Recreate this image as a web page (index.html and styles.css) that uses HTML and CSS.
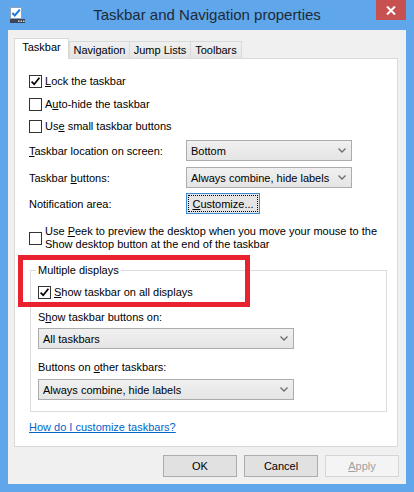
FILE: index.html
```html
<!DOCTYPE html>
<html>
<head>
<meta charset="utf-8">
<title>Taskbar and Navigation properties</title>
<link rel="stylesheet" href="styles.css">
</head>
<body>
<div class="window">
  <div class="titlebar">
    <svg class="app-icon" width="16" height="16" viewBox="0 0 16 16">
      <rect x="1.5" y="0.5" width="11" height="11" fill="#ffffff" stroke="#8fa3b8"/>
      <path d="M3.3 6 L5.8 8.5 L10.8 2.6" stroke="#1f7bd6" stroke-width="2" fill="none"/>
      <rect x="1" y="12" width="15" height="4" fill="#3a4656"/>
      <rect x="9" y="13.5" width="1.5" height="1.5" fill="#c9d2dc"/>
      <rect x="11.5" y="13.5" width="1.5" height="1.5" fill="#c9d2dc"/>
      <rect x="14" y="13.5" width="1.5" height="1.5" fill="#c9d2dc"/>
    </svg>
    <div class="title">Taskbar and Navigation properties</div>
    <div class="close">
      <svg width="10" height="9" viewBox="0 0 10 9"><path d="M1 0.5 L9 8.5 M9 0.5 L1 8.5" stroke="#ffffff" stroke-width="2"/></svg>
    </div>
  </div>
  <div class="client">
    <div class="tabs">
      <div class="tab active">Taskbar</div>
      <div class="tab t-nav">Navigation</div>
      <div class="tab t-jump">Jump Lists</div>
      <div class="tab t-tool">Toolbars</div>
    </div>
    <div class="panel">
      <div class="check-row first"><span class="cb"><svg width="11" height="11" viewBox="0 0 11 11"><path d="M1.6 5.6 L4.2 8.3 L9.4 1.8" stroke="#000" stroke-width="1.7" fill="none"/></svg></span><span><u>L</u>ock the taskbar</span></div>
      <div class="check-row second"><span class="cb"></span><span>A<u>u</u>to-hide the taskbar</span></div>
      <div class="check-row"><span class="cb"></span><span>Us<u>e</u> small taskbar buttons</span></div>

      <div class="field-row loc"><span class="field-label"><u>T</u>askbar location on screen:</span><div class="select narrow"><span>Bottom</span><svg class="chev" width="8" height="5" viewBox="0 0 8 5"><path d="M0.5 0.5 L4 4 L7.5 0.5" stroke="#6d6d6d" stroke-width="1.3" fill="none"/></svg></div></div>
      <div class="field-row btns"><span class="field-label">Taskbar <u>b</u>uttons:</span><div class="select narrow"><span>Always combine, hide labels</span><svg class="chev" width="8" height="5" viewBox="0 0 8 5"><path d="M0.5 0.5 L4 4 L7.5 0.5" stroke="#6d6d6d" stroke-width="1.3" fill="none"/></svg></div></div>
      <div class="field-row notif"><span class="field-label">Notification area:</span><div class="button focused"><span class="focus-ring"><u>C</u>ustomize...</span></div></div>

      <div class="peek-row"><span class="cb"></span><span class="peek-text">Use <u>P</u>eek to preview the desktop when you move your mouse to the<br>Show desktop button at the end of the taskbar</span></div>

      <fieldset class="group">
        <legend>Multiple displays</legend>
        <div class="check-row grp-check"><span class="cb"><svg width="11" height="11" viewBox="0 0 11 11"><path d="M1.6 5.6 L4.2 8.3 L9.4 1.8" stroke="#000" stroke-width="1.7" fill="none"/></svg></span><span><u>S</u>how taskbar on all displays</span></div>
        <div class="grp-label first-label">S<u>h</u>ow taskbar buttons on:</div>
        <div class="select wide first-sel"><span>All taskbars</span><svg class="chev" width="8" height="5" viewBox="0 0 8 5"><path d="M0.5 0.5 L4 4 L7.5 0.5" stroke="#6d6d6d" stroke-width="1.3" fill="none"/></svg></div>
        <div class="grp-label second-label">Buttons on <u>o</u>ther taskbars:</div>
        <div class="select wide second-sel"><span>Always combine, hide labels</span><svg class="chev" width="8" height="5" viewBox="0 0 8 5"><path d="M0.5 0.5 L4 4 L7.5 0.5" stroke="#6d6d6d" stroke-width="1.3" fill="none"/></svg></div>
      </fieldset>

      <a class="help" href="#">How do I customize taskbars?</a>

      <div class="highlight"></div>
    </div>
    <div class="buttons">
      <div class="button">OK</div>
      <div class="button">Cancel</div>
      <div class="button disabled"><span><u>A</u>pply</span></div>
    </div>
  </div>
</div>
</body>
</html>
```

FILE: styles.css
```css
* { box-sizing: border-box; }
html, body { margin: 0; padding: 0; }
body {
  width: 414px;
  height: 492px;
  overflow: hidden;
  background: #5fa6ea;
  font-family: "Liberation Sans", Arial, sans-serif;
  font-size: 11px;
  color: #000;
}
.window {
  width: 414px;
  height: 492px;
  background: #5fa6ea;
  display: flex;
  flex-direction: column;
}
.titlebar {
  height: 30px;
  display: grid;
  grid-template-columns: 1fr auto 1fr;
  align-items: start;
}
.app-icon {
  justify-self: start;
  margin: 7px 0 0 9px;
}
.title {
  font-size: 15px;
  line-height: 20px;
  margin-top: 5px;
  color: #1d2b38;
  white-space: nowrap;
}
.close {
  justify-self: end;
  width: 30px;
  height: 20px;
  margin-right: 8px;
  background: #c75050;
  display: flex;
  align-items: center;
  justify-content: center;
}
.client {
  height: 454px;
  margin: 0 8px;
  background: #f0f0f0;
  padding: 8px 8px 0 6px;
  display: flex;
  flex-direction: column;
}
.tabs {
  display: flex;
  align-items: flex-end;
  height: 20px;
  position: relative;
  z-index: 1;
}
.tab {
  height: 17px;
  border: 1px solid #d9d9d9;
  border-bottom: none;
  background: linear-gradient(#f0f0f0, #e5e5e5);
  margin-left: -1px;
  display: flex;
  align-items: center;
  justify-content: center;
  line-height: 15px;
  white-space: nowrap;
}
.tab.active {
  height: 21px;
  margin-left: 0;
  margin-bottom: -1px;
  width: 55px;
  background: #ffffff;
  padding-bottom: 3px;
  z-index: 2;
}
.t-nav { width: 61px; margin-left: 0; }
.t-jump { width: 62px; }
.t-tool { width: 52px; }
.panel {
  position: relative;
  width: 384px;
  height: 389px;
  background: #ffffff;
  border: 1px solid #d9d9d9;
  padding: 11px 0 0 14px;
  display: flex;
  flex-direction: column;
  align-items: flex-start;
}
.check-row {
  display: flex;
  align-items: center;
  height: 22px;
  white-space: nowrap;
}
.check-row.second { margin-top: 1px; }
.cb {
  width: 13px;
  height: 13px;
  border: 1px solid #333333;
  background: #ffffff;
  margin-right: 3px;
  flex: none;
  display: flex;
  align-items: center;
  justify-content: center;
}
.field-row {
  display: flex;
  align-items: center;
  height: 21px;
  white-space: nowrap;
}
.field-row.loc { margin-top: 3px; }
.field-row.btns { margin-top: 6px; }
.field-row.notif { margin-top: 5px; }
.field-label { width: 157px; }
.select {
  height: 21px;
  border: 1px solid #acacac;
  background: linear-gradient(#f0f0f0, #e5e5e5);
  display: flex;
  align-items: center;
  justify-content: space-between;
  padding: 0 5px 0 4px;
  white-space: nowrap;
}
.select.narrow { width: 166px; }
.select.wide { width: 256px; }
.button {
  width: 74px;
  height: 21px;
  border: 1px solid #adadad;
  background: #e1e1e1;
  display: flex;
  align-items: center;
  justify-content: center;
  white-space: nowrap;
}
.button.focused {
  width: 74px;
  height: 21px;
  border-color: #3c8ad8;
  background: #e5e5e5;
  padding: 1px;
}
.focus-ring {
  width: 100%;
  height: 100%;
  border: 1px dotted #000;
  display: flex;
  align-items: center;
  justify-content: center;
}
.peek-row {
  margin-top: 11px;
  display: flex;
  align-items: center;
}
.peek-text {
  line-height: 13px;
  white-space: nowrap;
}
.group {
  margin: 11px 0 0 1px;
  width: 357px;
  border: 1px solid #dcdcdc;
  padding: 0 0 11px 7px;
  min-width: 0;
}
.group legend {
  padding: 0 2px;
  margin-left: -2px;
  line-height: 16px;
}
.grp-check { height: 20px; margin-top: 4px; }
.grp-label { line-height: 16px; white-space: nowrap; }
.first-label { margin-top: 7px; }
.first-sel { margin-top: 3px; }
.second-label { margin-top: 10px; }
.second-sel { margin-top: 4px; }
.help {
  margin-top: 7px;
  line-height: 16px;
  color: #0066cc;
  text-decoration: underline;
}
.highlight {
  position: absolute;
  left: 3px;
  top: 196px;
  width: 232px;
  height: 52px;
  border: 5px solid #e8232f;
  pointer-events: none;
}
.buttons {
  display: flex;
  justify-content: flex-end;
  gap: 7px;
  margin-top: 8px;
  margin-right: -1px;
}
.buttons .button { height: 22px; }
.button.disabled {
  background: #f4f4f4;
  border-color: #d5d5d5;
  color: #a0a0a0;
}
```
